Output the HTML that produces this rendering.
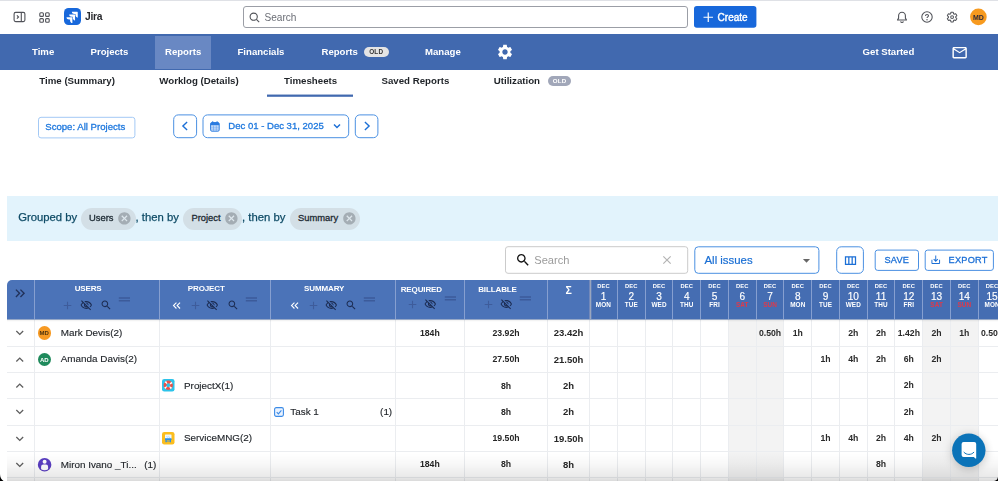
<!DOCTYPE html>
<html><head><meta charset="utf-8">
<style>
*{box-sizing:border-box;margin:0;padding:0}
html,body{width:998px;height:481px;overflow:hidden;background:#fff;font-family:"Liberation Sans",sans-serif;}
.a{position:absolute;white-space:nowrap}
#w{position:absolute;left:0;top:0;width:998px;height:481px;overflow:hidden;opacity:.999}
</style></head><body>
<div id="w">
<div class="a" style="left:0.00px;top:0.00px;width:998.00px;height:1.00px;background:#dfe1e6"></div>
<svg class="a" style="left:13px;top:11px" width="13" height="12" viewBox="0 0 13 12"><rect x="1.1" y="1.4" width="10.8" height="9.2" rx="1.6" fill="none" stroke="#505258" stroke-width="1.1"/><path d="M8.3 1.4v9.2" stroke="#505258" stroke-width="1.1"/><path d="M3.9 4.3l1.7 1.7-1.7 1.7" fill="none" stroke="#505258" stroke-width="1.1"/></svg>
<svg class="a" style="left:39px;top:11.5px" width="11" height="11" viewBox="0 0 11 11"><g fill="none" stroke="#505258" stroke-width="1.1"><rect x="0.8" y="0.8" width="3.6" height="3.6" rx="1"/><rect x="6.6" y="0.8" width="3.6" height="3.6" rx="1"/><rect x="0.8" y="6.6" width="3.6" height="3.6" rx="1"/><rect x="6.6" y="6.6" width="3.6" height="3.6" rx="1"/></g></svg>
<svg class="a" style="left:63.700px;top:8.300px" width="17" height="17" viewBox="0 0 32 32"><rect width="32" height="32" rx="8.500" fill="#1868db"/><g fill="#fff"><path d="M11.5 21.5h-1.9c-2.9 0-4.9-1.8-4.9-4.300h10.200c.5 0 .9.400.9.900v10.300c-2.500 0-4.300-2.100-4.300-4.900z" transform="translate(0,0)"/><path d="M16.5 16.400h-1.900c-2.900 0-4.900-1.700-4.900-4.300h10.200c.5 0 .9.400.9.900v10.300c-2.500 0-4.300-2.100-4.300-4.900z"/><path d="M21.600 11.400h-1.900c-2.900 0-4.900-1.800-4.900-4.300H25c.5 0 .9.400.9.900v10.200c-2.500 0-4.300-2-4.300-4.800z"/></g></svg>
<div class="a" style="left:85.00px;top:11.98px;font-size:10.3px;line-height:10.3px;font-weight:bold;color:#292a2e;letter-spacing:-.3px">Jira</div>
<div class="a" style="left:243.00px;top:6.00px;width:445.00px;height:22.00px;border:1px solid #9b9ea6;border-radius:3px;background:#fff"></div>
<svg class="a" style="left:248.5px;top:11.5px" width="11" height="11" viewBox="0 0 11 11"><circle cx="4.7" cy="4.7" r="3.6" fill="none" stroke="#505258" stroke-width="1.1"/><path d="M7.4 7.4l2.8 2.8" stroke="#505258" stroke-width="1.1"/></svg>
<div class="a" style="left:264.50px;top:12.75px;font-size:10.1px;line-height:10.1px;font-weight:normal;color:#6b6e76;">Search</div>
<svg class="a" style="left:693px;top:5px" width="65" height="24" viewBox="693 5 65 24"><rect x="694" y="6" width="62.400" height="21.800" rx="2.800" fill="#1868db"/></svg>
<svg class="a" style="left:702.5px;top:12px" width="10.5" height="10.500" viewBox="0 0 10 10"><path d="M5 0.500v9M0.500 5h9" stroke="#fff" stroke-width="1.150"/></svg>
<div class="a" style="left:717.60px;top:12.73px;font-size:10px;line-height:10px;font-weight:normal;color:#fff;-webkit-text-stroke:.4px">Create</div>
<svg class="a" style="left:896px;top:10.500px" width="12" height="13" viewBox="0 0 12 13"><path d="M6 1.300c-2 0-3.400 1.500-3.400 3.500v2.300l-1.100 1.900h9l-1.100-1.900V4.800c0-2-1.400-3.500-3.400-3.500z" fill="none" stroke="#505258" stroke-width="1.100" stroke-linejoin="round"/><path d="M4.600 10.300c.2.800.7 1.200 1.400 1.200s1.200-.4 1.400-1.200" fill="none" stroke="#505258" stroke-width="1.100"/></svg>
<svg class="a" style="left:921px;top:10.800px" width="12" height="12" viewBox="0 0 12 12"><circle cx="6" cy="6" r="5.200" fill="none" stroke="#505258" stroke-width="1.050"/><path d="M4.500 4.900c0-.9.700-1.500 1.500-1.500s1.500.6 1.500 1.400c0 1.100-1.500 1.100-1.500 2.300" fill="none" stroke="#505258" stroke-width="1.050"/><circle cx="6" cy="8.700" r=".7" fill="#505258"/></svg>
<svg class="a" style="left:945.900px;top:10.700px" width="12.200" height="12.200" viewBox="0 0 24 24"><path fill="none" stroke="#505258" stroke-width="2" stroke-linejoin="round" d="M19.140 12.940c.04-.3.060-.610.060-.940 0-.320-.020-.640-.070-.940l2.030-1.580c.180-.140.230-.410.120-.610l-1.920-3.320c-.12-.22-.37-.29-.59-.22l-2.390.96c-.5-.38-1.030-.7-1.620-.94l-.36-2.540c-.04-.24-.24-.41-.48-.41h-3.840c-.24 0-.43.170-.47.410l-.36 2.540c-.59.240-1.130.570-1.620.940l-2.390-.96c-.22-.08-.47 0-.59.220L2.740 8.870c-.12.210-.08.470.12.610l2.030 1.580c-.05.300-.09.630-.09.940s.02.640.07.940l-2.030 1.580c-.18.140-.23.410-.12.610l1.920 3.320c.12.220.37.290.59.220l2.390-.96c.5.380 1.030.7 1.620.94l.36 2.540c.05.240.24.410.48.410h3.840c.24 0 .44-.17.470-.41l.36-2.540c.59-.24 1.130-.56 1.620-.94l2.390.96c.22.080.47 0 .59-.22l1.920-3.320c.12-.22.070-.47-.12-.61l-2.010-1.580z"/><circle cx="12" cy="12" r="2.800" fill="none" stroke="#505258" stroke-width="2"/></svg>
<svg class="a" style="left:968px;top:6px" width="22" height="22" viewBox="968 6 22 22"><circle cx="978.400" cy="16.900" r="8.300" fill="#f79a1f"/></svg>
<div class="a" style="left:878.40px;width:200px;text-align:center;top:13.57px;font-size:7px;line-height:7px;font-weight:bold;color:#2d2a3a;">MD</div>
<div class="a" style="left:0.00px;top:34.00px;width:998.00px;height:35.70px;background:#4169af"></div>
<div class="a" style="left:154.60px;top:35.50px;width:56.20px;height:33.30px;background:#6988c3"></div>
<div class="a" style="left:32.00px;top:47.37px;font-size:9.6px;line-height:9.6px;font-weight:bold;color:#fff;">Time</div>
<div class="a" style="left:90.50px;top:47.37px;font-size:9.6px;line-height:9.6px;font-weight:bold;color:#fff;">Projects</div>
<div class="a" style="left:165.00px;top:47.37px;font-size:9.6px;line-height:9.6px;font-weight:bold;color:#fff;">Reports</div>
<div class="a" style="left:237.50px;top:47.37px;font-size:9.6px;line-height:9.6px;font-weight:bold;color:#fff;">Financials</div>
<div class="a" style="left:321.50px;top:47.37px;font-size:9.6px;line-height:9.6px;font-weight:bold;color:#fff;">Reports</div>
<div class="a" style="left:425.00px;top:47.37px;font-size:9.6px;line-height:9.6px;font-weight:bold;color:#fff;">Manage</div>
<div class="a" style="left:862.60px;top:47.37px;font-size:9.6px;line-height:9.6px;font-weight:bold;color:#fff;">Get Started</div>
<div class="a" style="left:363.50px;top:47.00px;width:25.00px;height:10.00px;background:#e4e4e4;border-radius:5px"></div>
<div class="a" style="left:276.20px;width:200px;text-align:center;top:49.48px;font-size:6.4px;line-height:6.4px;font-weight:bold;color:#333;letter-spacing:.2px">OLD</div>
<svg class="a" style="left:496.00px;top:43.00px;" width="18" height="18" viewBox="0 0 24 24"><path fill="#fff" d="M19.14 12.94c.04-.3.06-.61.06-.94 0-.32-.02-.64-.07-.94l2.03-1.58c.18-.14.23-.41.12-.61l-1.92-3.32c-.12-.22-.37-.29-.59-.22l-2.39.96c-.5-.38-1.03-.7-1.62-.94l-.36-2.54c-.04-.24-.24-.41-.48-.41h-3.84c-.24 0-.43.17-.47.41l-.36 2.54c-.59.24-1.13.57-1.62.94l-2.39-.96c-.22-.08-.47 0-.59.22L2.74 8.87c-.12.21-.08.47.12.61l2.03 1.58c-.05.3-.09.63-.09.94s.02.64.07.94l-2.03 1.58c-.18.14-.23.41-.12.61l1.92 3.32c.12.22.37.29.59.22l2.39-.96c.5.38 1.03.7 1.62.94l.36 2.54c.05.24.24.41.48.41h3.84c.24 0 .44-.17.47-.41l.36-2.54c.59-.24 1.13-.56 1.62-.94l2.39.96c.22.08.47 0 .59-.22l1.92-3.32c.12-.22.07-.47-.12-.61l-2.01-1.58zM12 15.6c-1.98 0-3.6-1.62-3.6-3.6s1.62-3.6 3.6-3.6 3.6 1.62 3.6 3.6-1.62 3.6-3.6 3.6z"/></svg>
<svg class="a" style="left:950.55px;top:43.55px;" width="17.3" height="17.3" viewBox="0 0 24 24"><path fill="#fff" d="M20 4H4c-1.1 0-1.99.9-1.99 2L2 18c0 1.1.9 2 2 2h16c1.1 0 2-.9 2-2V6c0-1.1-.9-2-2-2zm0 14H4V8l8 5 8-5v10zm-8-7L4 6h16l-8 5z"/></svg>
<div class="a" style="left:39.25px;top:76.29px;font-size:9.7px;line-height:9.7px;font-weight:bold;color:#1f2328;">Time (Summary)</div>
<div class="a" style="left:159.25px;top:76.29px;font-size:9.7px;line-height:9.7px;font-weight:bold;color:#1f2328;">Worklog (Details)</div>
<div class="a" style="left:284.00px;top:76.29px;font-size:9.7px;line-height:9.7px;font-weight:bold;color:#1f2328;">Timesheets</div>
<div class="a" style="left:381.50px;top:76.29px;font-size:9.7px;line-height:9.7px;font-weight:bold;color:#1f2328;">Saved Reports</div>
<div class="a" style="left:493.75px;top:76.29px;font-size:9.7px;line-height:9.7px;font-weight:bold;color:#1f2328;">Utilization</div>
<div class="a" style="left:267.00px;top:94.00px;width:86.00px;height:3.00px;background:linear-gradient(to bottom,rgba(65,105,175,.45) 0,rgba(65,105,175,.45) 33.300%,#4169af 33.300%,#4169af 66.600%,rgba(65,105,175,.8) 66.600%)"></div>
<div class="a" style="left:548.00px;top:76.20px;width:22.60px;height:9.40px;background:#a1a7b9;border-radius:5px"></div>
<div class="a" style="left:459.50px;width:200px;text-align:center;top:78.45px;font-size:6.2px;line-height:6.2px;font-weight:bold;color:#fff;letter-spacing:.2px">OLD</div>
<svg class="a" style="left:37px;top:115px" width="100" height="25" viewBox="37 115 100 25"><rect x="38.50" y="117.30" width="96.40" height="20.60" rx="2.5" fill="#fff" stroke="#a3c9f5" stroke-width="1"/></svg>
<div class="a" style="left:45.25px;top:122.37px;font-size:9.6px;line-height:9.6px;font-weight:normal;color:#1e78de;-webkit-text-stroke:.3px">Scope: All Projects</div>
<svg class="a" style="left:172px;top:113px" width="27" height="27" viewBox="172 113 27 27"><rect x="173.70" y="114.90" width="22.90" height="22.80" rx="4.5" fill="#fff" stroke="#4a90e2" stroke-width="1"/></svg>
<svg class="a" style="left:172.60px;top:114.20px" width="24" height="24" viewBox="0 0 24 24"><path d="M14.10 8.00 L9.90 12.00 L14.10 16.00" fill="none" stroke="#1b6fd6" stroke-width="1.4"/></svg>
<svg class="a" style="left:201px;top:113px" width="150" height="27" viewBox="201 113 150 27"><rect x="203.00" y="114.90" width="145.70" height="22.80" rx="4.5" fill="#fff" stroke="#4a90e2" stroke-width="1"/></svg>
<svg class="a" style="left:210.200px;top:121px" width="9.800" height="10.800" viewBox="0 0 9.800 10.800"><rect x="0.600" y="1.600" width="8.600" height="8.600" rx="1.300" fill="#d5e5fa" stroke="#2b7be0" stroke-width="1"/><path d="M0.600 4.200V2.900a1.300 1.300 0 0 1 1.300-1.300h6a1.300 1.300 0 0 1 1.300 1.300v1.300z" fill="#2b7be0"/><path d="M2.700 0.200v1.800M7.100 0.200v1.800" stroke="#2b7be0" stroke-width="1.100"/><path d="M3.500 4.500v5.400M6.300 4.500v5.400M1 6.200h7.800M1 8.100h7.800" stroke="#5e9cec" stroke-width=".55"/></svg>
<div class="a" style="left:228.25px;top:121.42px;font-size:9.55px;line-height:9.55px;font-weight:normal;color:#1e78de;-webkit-text-stroke:.3px">Dec 01 - Dec 31, 2025</div>
<svg class="a" style="left:324.90px;top:114.30px" width="24" height="24" viewBox="0 0 24 24"><path d="M9.00 10.40 L12.00 13.60 L15.00 10.40" fill="none" stroke="#1b6fd6" stroke-width="1.4"/></svg>
<svg class="a" style="left:353px;top:113px" width="27" height="27" viewBox="353 113 27 27"><rect x="355.30" y="114.90" width="22.60" height="22.80" rx="4.5" fill="#fff" stroke="#4a90e2" stroke-width="1"/></svg>
<svg class="a" style="left:355.20px;top:114.20px" width="24" height="24" viewBox="0 0 24 24"><path d="M9.90 8.00 L14.10 12.00 L9.90 16.00" fill="none" stroke="#1b6fd6" stroke-width="1.4"/></svg>
<div class="a" style="left:7.00px;top:195.60px;width:991.00px;height:45.20px;background:#e2f3fc"></div>
<div class="a" style="left:18.20px;top:212.23px;font-size:11.3px;line-height:11.3px;font-weight:normal;color:#0e4b66;-webkit-text-stroke:.25px">Grouped by</div>
<div class="a" style="left:80.80px;top:207.60px;width:55.00px;height:22.00px;background:#d3dfe6;border-radius:11px"></div>
<div class="a" style="left:89.00px;top:213.24px;font-size:9.4px;line-height:9.4px;font-weight:normal;color:#1d2a33;-webkit-text-stroke:.3px">Users</div>
<div class="a" style="left:120.90px;top:214.30px;width:8.00px;height:8.00px;background:#dde6ec;border-radius:50%"></div>
<svg class="a" style="left:117.30px;top:211.00px;" width="14.8" height="14.8" viewBox="0 0 24 24"><path fill="#a4adb4" d="M12 2C6.47 2 2 6.47 2 12s4.47 10 10 10 10-4.47 10-10S17.53 2 12 2zm5 13.59L15.59 17 12 13.41 8.41 17 7 15.59 10.59 12 7 8.41 8.41 7 12 10.59 15.59 7 17 8.41 13.41 12 17 15.59z"/></svg>
<div class="a" style="left:135.60px;top:212.23px;font-size:11.3px;line-height:11.3px;font-weight:normal;color:#0e4b66;-webkit-text-stroke:.25px">, then by</div>
<div class="a" style="left:183.00px;top:207.60px;width:59.40px;height:22.00px;background:#d3dfe6;border-radius:11px"></div>
<div class="a" style="left:191.40px;top:213.24px;font-size:9.4px;line-height:9.4px;font-weight:normal;color:#1d2a33;-webkit-text-stroke:.3px">Project</div>
<div class="a" style="left:227.80px;top:214.30px;width:8.00px;height:8.00px;background:#dde6ec;border-radius:50%"></div>
<svg class="a" style="left:224.20px;top:211.00px;" width="14.8" height="14.8" viewBox="0 0 24 24"><path fill="#a4adb4" d="M12 2C6.47 2 2 6.47 2 12s4.47 10 10 10 10-4.47 10-10S17.53 2 12 2zm5 13.59L15.59 17 12 13.41 8.41 17 7 15.59 10.59 12 7 8.41 8.41 7 12 10.59 15.59 7 17 8.41 13.41 12 17 15.59z"/></svg>
<div class="a" style="left:242.00px;top:212.23px;font-size:11.3px;line-height:11.3px;font-weight:normal;color:#0e4b66;-webkit-text-stroke:.25px">, then by</div>
<div class="a" style="left:290.00px;top:207.60px;width:70.40px;height:22.00px;background:#d3dfe6;border-radius:11px"></div>
<div class="a" style="left:298.00px;top:213.24px;font-size:9.4px;line-height:9.4px;font-weight:normal;color:#1d2a33;-webkit-text-stroke:.3px">Summary</div>
<div class="a" style="left:345.40px;top:214.30px;width:8.00px;height:8.00px;background:#dde6ec;border-radius:50%"></div>
<svg class="a" style="left:341.80px;top:211.00px;" width="14.8" height="14.8" viewBox="0 0 24 24"><path fill="#a4adb4" d="M12 2C6.47 2 2 6.47 2 12s4.47 10 10 10 10-4.47 10-10S17.53 2 12 2zm5 13.59L15.59 17 12 13.41 8.41 17 7 15.59 10.59 12 7 8.41 8.41 7 12 10.59 15.59 7 17 8.41 13.41 12 17 15.59z"/></svg>
<svg class="a" style="left:504px;top:245px" width="186" height="30" viewBox="504 245 186 30"><rect x="505.50" y="246.70" width="182.20" height="26.60" rx="2.5" fill="#fff" stroke="#cbcbcb" stroke-width="1"/></svg>
<svg class="a" style="left:515.00px;top:252.30px;" width="16" height="16" viewBox="0 0 24 24"><path fill="#111" d="M15.5 14h-.79l-.28-.27C15.41 12.59 16 11.11 16 9.5 16 5.91 13.09 3 9.5 3S3 5.91 3 9.5 5.91 16 9.5 16c1.61 0 3.09-.59 4.23-1.57l.27.28v.79l5 4.99L20.49 19l-4.99-5zm-6 0C7.01 14 5 11.99 5 9.5S7.01 5 9.5 5 14 7.01 14 9.5 11.99 14 9.5 14z"/></svg>
<div class="a" style="left:534.25px;top:254.85px;font-size:11.1px;line-height:11.1px;font-weight:normal;color:#9b9b9b;">Search</div>
<svg class="a" style="left:659.75px;top:253.25px;" width="14" height="14" viewBox="0 0 24 24"><path fill="#b3b3b3" d="M19 6.41L17.59 5 12 10.59 6.41 5 5 6.41 10.59 12 5 17.59 6.41 19 12 13.41 17.59 19 19 17.59 13.41 12z"/></svg>
<svg class="a" style="left:693px;top:245px" width="128" height="30" viewBox="693 245 128 30"><rect x="694.80" y="246.80" width="124.10" height="26.50" rx="3.5" fill="#fff" stroke="#4a90e2" stroke-width="1"/></svg>
<div class="a" style="left:704.50px;top:254.85px;font-size:11.4px;line-height:11.4px;font-weight:normal;color:#1a6fd4;-webkit-text-stroke:.2px">All issues</div>
<svg class="a" style="left:797.70px;top:251.70px;" width="17" height="17" viewBox="0 0 24 24"><path fill="#666" d="M7 10l5 5 5-5z"/></svg>
<svg class="a" style="left:835px;top:245px" width="30" height="30" viewBox="835 245 30 30"><rect x="836.70" y="246.80" width="26.70" height="26.50" rx="4.5" fill="#fff" stroke="#4a90e2" stroke-width="1"/></svg>
<svg class="a" style="left:842.50px;top:252.60px;" width="15" height="15" viewBox="0 0 24 24"><path fill="#1b6fd6" d="M3 5v14h18V5H3zm5.33 12H5V7h3.33v10zm5.34 0h-3.33V7h3.33v10zM19 17h-3.33V7H19v10z"/></svg>
<svg class="a" style="left:873px;top:248px" width="47" height="24" viewBox="873 248 47 24"><rect x="875.20" y="250.10" width="43.30" height="20.30" rx="2.5" fill="#fff" stroke="#4a90e2" stroke-width="1"/></svg>
<div class="a" style="left:796.85px;width:200px;text-align:center;top:255.81px;font-size:9.2px;line-height:9.2px;font-weight:normal;color:#1b6fd6;letter-spacing:.25px;-webkit-text-stroke:.3px">SAVE</div>
<svg class="a" style="left:923px;top:248px" width="72" height="24" viewBox="923 248 72 24"><rect x="925.20" y="250.10" width="68.20" height="20.30" rx="2.5" fill="#fff" stroke="#4a90e2" stroke-width="1"/></svg>
<svg class="a" style="left:930.45px;top:254.25px;" width="11.5" height="11.5" viewBox="0 0 24 24"><path fill="#1b6fd6" d="M19 12v7H5v-7H3v7c0 1.1.9 2 2 2h14c1.1 0 2-.9 2-2v-7h-2zm-6 .67l2.59-2.58L17 11.5l-5 5-5-5 1.41-1.41L11 12.67V3h2z"/></svg>
<div class="a" style="left:948.60px;top:255.81px;font-size:9.2px;line-height:9.2px;font-weight:normal;color:#1b6fd6;letter-spacing:.25px;-webkit-text-stroke:.3px">EXPORT</div>
<div class="a" style="left:7.00px;top:279.70px;width:991.00px;height:39.30px;background:#4b73b8;border-top-left-radius:5px"></div>
<div class="a" style="left:33.75px;top:279.70px;width:1.00px;height:39.30px;background:#869fd0"></div>
<div class="a" style="left:158.70px;top:279.70px;width:1.00px;height:39.30px;background:#869fd0"></div>
<div class="a" style="left:269.80px;top:279.70px;width:1.00px;height:39.30px;background:#869fd0"></div>
<div class="a" style="left:394.70px;top:279.70px;width:1.00px;height:39.30px;background:#869fd0"></div>
<div class="a" style="left:464.00px;top:279.70px;width:1.00px;height:39.30px;background:#869fd0"></div>
<div class="a" style="left:547.00px;top:279.70px;width:1.00px;height:39.30px;background:#869fd0"></div>
<div class="a" style="left:590.00px;top:279.70px;width:408.00px;height:39.30px;background:#456db2"></div>
<div class="a" style="left:589.00px;top:279.70px;width:3.00px;height:39.30px;background:linear-gradient(to right,#7389ba 0,#7389ba 33%,#9ba6bd 33%,#9ba6bd 67%,#5f7fb9 67%)"></div>
<div class="a" style="left:503.48px;width:200px;text-align:center;top:284.19px;font-size:5.8px;line-height:5.8px;font-weight:bold;color:#fff;letter-spacing:.1px">DEC</div>
<div class="a" style="left:503.48px;width:200px;text-align:center;top:291.75px;font-size:10.1px;line-height:10.1px;font-weight:normal;color:#fff;-webkit-text-stroke:.15px">1</div>
<div class="a" style="left:503.48px;width:200px;text-align:center;top:301.58px;font-size:6.4px;line-height:6.4px;font-weight:bold;color:#fff;letter-spacing:.1px">MON</div>
<div class="a" style="left:616.86px;top:279.70px;width:1.00px;height:39.30px;background:#869fd0"></div>
<div class="a" style="left:531.24px;width:200px;text-align:center;top:284.19px;font-size:5.8px;line-height:5.8px;font-weight:bold;color:#fff;letter-spacing:.1px">DEC</div>
<div class="a" style="left:531.24px;width:200px;text-align:center;top:291.75px;font-size:10.1px;line-height:10.1px;font-weight:normal;color:#fff;-webkit-text-stroke:.15px">2</div>
<div class="a" style="left:531.24px;width:200px;text-align:center;top:301.58px;font-size:6.4px;line-height:6.4px;font-weight:bold;color:#fff;letter-spacing:.1px">TUE</div>
<div class="a" style="left:644.62px;top:279.70px;width:1.00px;height:39.30px;background:#869fd0"></div>
<div class="a" style="left:559.00px;width:200px;text-align:center;top:284.19px;font-size:5.8px;line-height:5.8px;font-weight:bold;color:#fff;letter-spacing:.1px">DEC</div>
<div class="a" style="left:559.00px;width:200px;text-align:center;top:291.75px;font-size:10.1px;line-height:10.1px;font-weight:normal;color:#fff;-webkit-text-stroke:.15px">3</div>
<div class="a" style="left:559.00px;width:200px;text-align:center;top:301.58px;font-size:6.4px;line-height:6.4px;font-weight:bold;color:#fff;letter-spacing:.1px">WED</div>
<div class="a" style="left:672.38px;top:279.70px;width:1.00px;height:39.30px;background:#869fd0"></div>
<div class="a" style="left:586.76px;width:200px;text-align:center;top:284.19px;font-size:5.8px;line-height:5.8px;font-weight:bold;color:#fff;letter-spacing:.1px">DEC</div>
<div class="a" style="left:586.76px;width:200px;text-align:center;top:291.75px;font-size:10.1px;line-height:10.1px;font-weight:normal;color:#fff;-webkit-text-stroke:.15px">4</div>
<div class="a" style="left:586.76px;width:200px;text-align:center;top:301.58px;font-size:6.4px;line-height:6.4px;font-weight:bold;color:#fff;letter-spacing:.1px">THU</div>
<div class="a" style="left:700.14px;top:279.70px;width:1.00px;height:39.30px;background:#869fd0"></div>
<div class="a" style="left:614.52px;width:200px;text-align:center;top:284.19px;font-size:5.8px;line-height:5.8px;font-weight:bold;color:#fff;letter-spacing:.1px">DEC</div>
<div class="a" style="left:614.52px;width:200px;text-align:center;top:291.75px;font-size:10.1px;line-height:10.1px;font-weight:normal;color:#fff;-webkit-text-stroke:.15px">5</div>
<div class="a" style="left:614.52px;width:200px;text-align:center;top:301.58px;font-size:6.4px;line-height:6.4px;font-weight:bold;color:#fff;letter-spacing:.1px">FRI</div>
<div class="a" style="left:727.90px;top:279.70px;width:1.00px;height:39.30px;background:#869fd0"></div>
<div class="a" style="left:642.28px;width:200px;text-align:center;top:284.19px;font-size:5.8px;line-height:5.8px;font-weight:bold;color:#fff;letter-spacing:.1px">DEC</div>
<div class="a" style="left:642.28px;width:200px;text-align:center;top:291.75px;font-size:10.1px;line-height:10.1px;font-weight:normal;color:#fff;-webkit-text-stroke:.15px">6</div>
<div class="a" style="left:642.28px;width:200px;text-align:center;top:301.58px;font-size:6.4px;line-height:6.4px;font-weight:bold;color:#e0394a;letter-spacing:.1px">SAT</div>
<div class="a" style="left:755.66px;top:279.70px;width:1.00px;height:39.30px;background:#869fd0"></div>
<div class="a" style="left:670.04px;width:200px;text-align:center;top:284.19px;font-size:5.8px;line-height:5.8px;font-weight:bold;color:#fff;letter-spacing:.1px">DEC</div>
<div class="a" style="left:670.04px;width:200px;text-align:center;top:291.75px;font-size:10.1px;line-height:10.1px;font-weight:normal;color:#fff;-webkit-text-stroke:.15px">7</div>
<div class="a" style="left:670.04px;width:200px;text-align:center;top:301.58px;font-size:6.4px;line-height:6.4px;font-weight:bold;color:#e0394a;letter-spacing:.1px">SUN</div>
<div class="a" style="left:783.42px;top:279.70px;width:1.00px;height:39.30px;background:#869fd0"></div>
<div class="a" style="left:697.80px;width:200px;text-align:center;top:284.19px;font-size:5.8px;line-height:5.8px;font-weight:bold;color:#fff;letter-spacing:.1px">DEC</div>
<div class="a" style="left:697.80px;width:200px;text-align:center;top:291.75px;font-size:10.1px;line-height:10.1px;font-weight:normal;color:#fff;-webkit-text-stroke:.15px">8</div>
<div class="a" style="left:697.80px;width:200px;text-align:center;top:301.58px;font-size:6.4px;line-height:6.4px;font-weight:bold;color:#fff;letter-spacing:.1px">MON</div>
<div class="a" style="left:811.18px;top:279.70px;width:1.00px;height:39.30px;background:#869fd0"></div>
<div class="a" style="left:725.56px;width:200px;text-align:center;top:284.19px;font-size:5.8px;line-height:5.8px;font-weight:bold;color:#fff;letter-spacing:.1px">DEC</div>
<div class="a" style="left:725.56px;width:200px;text-align:center;top:291.75px;font-size:10.1px;line-height:10.1px;font-weight:normal;color:#fff;-webkit-text-stroke:.15px">9</div>
<div class="a" style="left:725.56px;width:200px;text-align:center;top:301.58px;font-size:6.4px;line-height:6.4px;font-weight:bold;color:#fff;letter-spacing:.1px">TUE</div>
<div class="a" style="left:838.94px;top:279.70px;width:1.00px;height:39.30px;background:#869fd0"></div>
<div class="a" style="left:753.32px;width:200px;text-align:center;top:284.19px;font-size:5.8px;line-height:5.8px;font-weight:bold;color:#fff;letter-spacing:.1px">DEC</div>
<div class="a" style="left:753.32px;width:200px;text-align:center;top:291.75px;font-size:10.1px;line-height:10.1px;font-weight:normal;color:#fff;-webkit-text-stroke:.15px">10</div>
<div class="a" style="left:753.32px;width:200px;text-align:center;top:301.58px;font-size:6.4px;line-height:6.4px;font-weight:bold;color:#fff;letter-spacing:.1px">WED</div>
<div class="a" style="left:866.70px;top:279.70px;width:1.00px;height:39.30px;background:#869fd0"></div>
<div class="a" style="left:781.08px;width:200px;text-align:center;top:284.19px;font-size:5.8px;line-height:5.8px;font-weight:bold;color:#fff;letter-spacing:.1px">DEC</div>
<div class="a" style="left:781.08px;width:200px;text-align:center;top:291.75px;font-size:10.1px;line-height:10.1px;font-weight:normal;color:#fff;-webkit-text-stroke:.15px">11</div>
<div class="a" style="left:781.08px;width:200px;text-align:center;top:301.58px;font-size:6.4px;line-height:6.4px;font-weight:bold;color:#fff;letter-spacing:.1px">THU</div>
<div class="a" style="left:894.46px;top:279.70px;width:1.00px;height:39.30px;background:#869fd0"></div>
<div class="a" style="left:808.84px;width:200px;text-align:center;top:284.19px;font-size:5.8px;line-height:5.8px;font-weight:bold;color:#fff;letter-spacing:.1px">DEC</div>
<div class="a" style="left:808.84px;width:200px;text-align:center;top:291.75px;font-size:10.1px;line-height:10.1px;font-weight:normal;color:#fff;-webkit-text-stroke:.15px">12</div>
<div class="a" style="left:808.84px;width:200px;text-align:center;top:301.58px;font-size:6.4px;line-height:6.4px;font-weight:bold;color:#fff;letter-spacing:.1px">FRI</div>
<div class="a" style="left:922.22px;top:279.70px;width:1.00px;height:39.30px;background:#869fd0"></div>
<div class="a" style="left:836.60px;width:200px;text-align:center;top:284.19px;font-size:5.8px;line-height:5.8px;font-weight:bold;color:#fff;letter-spacing:.1px">DEC</div>
<div class="a" style="left:836.60px;width:200px;text-align:center;top:291.75px;font-size:10.1px;line-height:10.1px;font-weight:normal;color:#fff;-webkit-text-stroke:.15px">13</div>
<div class="a" style="left:836.60px;width:200px;text-align:center;top:301.58px;font-size:6.4px;line-height:6.4px;font-weight:bold;color:#e0394a;letter-spacing:.1px">SAT</div>
<div class="a" style="left:949.98px;top:279.70px;width:1.00px;height:39.30px;background:#869fd0"></div>
<div class="a" style="left:864.36px;width:200px;text-align:center;top:284.19px;font-size:5.8px;line-height:5.8px;font-weight:bold;color:#fff;letter-spacing:.1px">DEC</div>
<div class="a" style="left:864.36px;width:200px;text-align:center;top:291.75px;font-size:10.1px;line-height:10.1px;font-weight:normal;color:#fff;-webkit-text-stroke:.15px">14</div>
<div class="a" style="left:864.36px;width:200px;text-align:center;top:301.58px;font-size:6.4px;line-height:6.4px;font-weight:bold;color:#e0394a;letter-spacing:.1px">SUN</div>
<div class="a" style="left:977.74px;top:279.70px;width:1.00px;height:39.30px;background:#869fd0"></div>
<div class="a" style="left:892.12px;width:200px;text-align:center;top:284.19px;font-size:5.8px;line-height:5.8px;font-weight:bold;color:#fff;letter-spacing:.1px">DEC</div>
<div class="a" style="left:892.12px;width:200px;text-align:center;top:291.75px;font-size:10.1px;line-height:10.1px;font-weight:normal;color:#fff;-webkit-text-stroke:.15px">15</div>
<div class="a" style="left:892.12px;width:200px;text-align:center;top:301.58px;font-size:6.4px;line-height:6.4px;font-weight:bold;color:#fff;letter-spacing:.1px">MON</div>
<svg class="a" style="left:12.25px;top:285.35px;" width="16.5" height="16.5" viewBox="0 0 24 24"><path fill="#22325a" d="M6.41 6L5 7.41 9.58 12 5 16.59 6.41 18l6-6z M13 6l-1.41 1.41L16.17 12l-4.58 4.59L13 18l6-6z"/></svg>
<div class="a" style="left:-11.90px;width:200px;text-align:center;top:284.63px;font-size:8px;line-height:8px;font-weight:bold;color:#fff;letter-spacing:-.12px">USERS</div>
<svg class="a" style="left:61.40px;top:298.80px;" width="13" height="13" viewBox="0 0 24 24"><path fill="#3e5c9b" d="M19 13h-6v6h-2v-6H5v-2h6V5h2v6h6v2z"/></svg>
<svg class="a" style="left:79.85px;top:299.05px;" width="12.5" height="12.5" viewBox="0 0 24 24"><path fill="#1c2c52" d="M12 6c3.79 0 7.17 2.13 8.82 5.5-.59 1.22-1.42 2.27-2.41 3.12l1.41 1.41c1.39-1.23 2.49-2.77 3.18-4.53C21.27 7.11 17 4 12 4c-1.27 0-2.49.2-3.64.57l1.65 1.65C10.66 6.09 11.32 6 12 6zm-1.07 1.14L13 9.21c.57.25 1.03.71 1.28 1.28l2.07 2.07c.08-.34.14-.7.14-1.07C16.5 9.01 14.48 7 12 7c-.37 0-.72.05-1.07.14zM2.01 3.87l2.68 2.68C3.06 7.83 1.77 9.53 1 11.5 2.73 15.89 7 19 12 19c1.52 0 2.98-.29 4.32-.82l3.42 3.42 1.41-1.41L3.42 2.45 2.01 3.87zm7.5 7.5l2.61 2.61c-.04.01-.08.02-.12.02-1.38 0-2.5-1.12-2.5-2.5 0-.05.01-.08.01-.13zm-3.4-3.4l1.75 1.75c-.23.55-.36 1.15-.36 1.78 0 2.48 2.02 4.5 4.5 4.5.63 0 1.23-.13 1.77-.36l.98.98c-.88.24-1.8.38-2.75.38-3.79 0-7.17-2.13-8.82-5.5.7-1.43 1.72-2.61 2.93-3.53z"/></svg>
<svg class="a" style="left:99.75px;top:299.15px;" width="12.3" height="12.3" viewBox="0 0 24 24"><path fill="#1c2c52" d="M15.5 14h-.79l-.28-.27C15.41 12.59 16 11.11 16 9.5 16 5.91 13.09 3 9.5 3S3 5.91 3 9.5 5.91 16 9.5 16c1.61 0 3.09-.59 4.23-1.57l.27.28v.79l5 4.99L20.49 19l-4.99-5zm-6 0C7.01 14 5 11.99 5 9.5S7.01 5 9.5 5 14 7.01 14 9.5 11.99 14 9.5 14z"/></svg>
<svg class="a" style="left:116.20px;top:291.00px;" width="16.8" height="16.8" viewBox="0 0 24 24"><path fill="#3c5b9a" d="M20 9H4v2h16V9zM4 15h16v-2H4v2z"/></svg>
<div class="a" style="left:106.25px;width:200px;text-align:center;top:284.63px;font-size:8px;line-height:8px;font-weight:bold;color:#fff;letter-spacing:-.12px">PROJECT</div>
<svg class="a" style="left:170.20px;top:298.70px;" width="13.2" height="13.2" viewBox="0 0 24 24"><path fill="#fff" d="M17.59 18L19 16.59 14.42 12 19 7.41 17.59 6l-6 6z M11 18l1.41-1.41L7.83 12l4.58-4.59L11 6l-6 6z"/></svg>
<svg class="a" style="left:188.50px;top:298.80px;" width="13" height="13" viewBox="0 0 24 24"><path fill="#3e5c9b" d="M19 13h-6v6h-2v-6H5v-2h6V5h2v6h6v2z"/></svg>
<svg class="a" style="left:206.45px;top:299.05px;" width="12.5" height="12.5" viewBox="0 0 24 24"><path fill="#1c2c52" d="M12 6c3.79 0 7.17 2.13 8.82 5.5-.59 1.22-1.42 2.27-2.41 3.12l1.41 1.41c1.39-1.23 2.49-2.77 3.18-4.53C21.27 7.11 17 4 12 4c-1.27 0-2.49.2-3.64.57l1.65 1.65C10.66 6.09 11.32 6 12 6zm-1.07 1.14L13 9.21c.57.25 1.03.71 1.28 1.28l2.07 2.07c.08-.34.14-.7.14-1.07C16.5 9.01 14.48 7 12 7c-.37 0-.72.05-1.07.14zM2.01 3.87l2.68 2.68C3.06 7.83 1.77 9.53 1 11.5 2.73 15.89 7 19 12 19c1.52 0 2.98-.29 4.32-.82l3.42 3.42 1.41-1.41L3.42 2.45 2.01 3.87zm7.5 7.5l2.61 2.61c-.04.01-.08.02-.12.02-1.38 0-2.5-1.12-2.5-2.5 0-.05.01-.08.01-.13zm-3.4-3.4l1.75 1.75c-.23.55-.36 1.15-.36 1.78 0 2.48 2.02 4.5 4.5 4.5.63 0 1.23-.13 1.77-.36l.98.98c-.88.24-1.8.38-2.75.38-3.79 0-7.17-2.13-8.82-5.5.7-1.43 1.72-2.61 2.93-3.53z"/></svg>
<svg class="a" style="left:226.55px;top:299.15px;" width="12.3" height="12.3" viewBox="0 0 24 24"><path fill="#1c2c52" d="M15.5 14h-.79l-.28-.27C15.41 12.59 16 11.11 16 9.5 16 5.91 13.09 3 9.5 3S3 5.91 3 9.5 5.91 16 9.5 16c1.61 0 3.09-.59 4.23-1.57l.27.28v.79l5 4.99L20.49 19l-4.99-5zm-6 0C7.01 14 5 11.99 5 9.5S7.01 5 9.5 5 14 7.01 14 9.5 11.99 14 9.5 14z"/></svg>
<svg class="a" style="left:243.10px;top:291.00px;" width="16.8" height="16.8" viewBox="0 0 24 24"><path fill="#3c5b9a" d="M20 9H4v2h16V9zM4 15h16v-2H4v2z"/></svg>
<div class="a" style="left:224.15px;width:200px;text-align:center;top:284.63px;font-size:8px;line-height:8px;font-weight:bold;color:#fff;letter-spacing:-.12px">SUMMARY</div>
<svg class="a" style="left:288.40px;top:298.70px;" width="13.2" height="13.2" viewBox="0 0 24 24"><path fill="#fff" d="M17.59 18L19 16.59 14.42 12 19 7.41 17.59 6l-6 6z M11 18l1.41-1.41L7.83 12l4.58-4.59L11 6l-6 6z"/></svg>
<svg class="a" style="left:306.50px;top:298.80px;" width="13" height="13" viewBox="0 0 24 24"><path fill="#3e5c9b" d="M19 13h-6v6h-2v-6H5v-2h6V5h2v6h6v2z"/></svg>
<svg class="a" style="left:324.75px;top:299.05px;" width="12.5" height="12.5" viewBox="0 0 24 24"><path fill="#1c2c52" d="M12 6c3.79 0 7.17 2.13 8.82 5.5-.59 1.22-1.42 2.27-2.41 3.12l1.41 1.41c1.39-1.23 2.49-2.77 3.18-4.53C21.27 7.11 17 4 12 4c-1.27 0-2.49.2-3.64.57l1.65 1.65C10.66 6.09 11.32 6 12 6zm-1.07 1.14L13 9.21c.57.25 1.03.71 1.28 1.28l2.07 2.07c.08-.34.14-.7.14-1.07C16.5 9.01 14.48 7 12 7c-.37 0-.72.05-1.07.14zM2.01 3.87l2.68 2.68C3.06 7.83 1.77 9.53 1 11.5 2.73 15.89 7 19 12 19c1.52 0 2.98-.29 4.32-.82l3.42 3.42 1.41-1.41L3.42 2.45 2.01 3.87zm7.5 7.5l2.61 2.61c-.04.01-.08.02-.12.02-1.38 0-2.5-1.12-2.5-2.5 0-.05.01-.08.01-.13zm-3.4-3.4l1.75 1.75c-.23.55-.36 1.15-.36 1.78 0 2.48 2.02 4.5 4.5 4.5.63 0 1.23-.13 1.77-.36l.98.98c-.88.24-1.8.38-2.75.38-3.79 0-7.17-2.13-8.82-5.5.7-1.43 1.72-2.61 2.93-3.53z"/></svg>
<svg class="a" style="left:344.75px;top:299.15px;" width="12.3" height="12.3" viewBox="0 0 24 24"><path fill="#1c2c52" d="M15.5 14h-.79l-.28-.27C15.41 12.59 16 11.11 16 9.5 16 5.91 13.09 3 9.5 3S3 5.91 3 9.5 5.91 16 9.5 16c1.61 0 3.09-.59 4.23-1.57l.27.28v.79l5 4.99L20.49 19l-4.99-5zm-6 0C7.01 14 5 11.99 5 9.5S7.01 5 9.5 5 14 7.01 14 9.5 11.99 14 9.5 14z"/></svg>
<svg class="a" style="left:361.20px;top:291.00px;" width="16.8" height="16.8" viewBox="0 0 24 24"><path fill="#3c5b9a" d="M20 9H4v2h16V9zM4 15h16v-2H4v2z"/></svg>
<div class="a" style="left:321.35px;width:200px;text-align:center;top:286.33px;font-size:8px;line-height:8px;font-weight:bold;color:#fff;letter-spacing:-.12px">REQUIRED</div>
<svg class="a" style="left:405.80px;top:298.00px;" width="13" height="13" viewBox="0 0 24 24"><path fill="#3e5c9b" d="M19 13h-6v6h-2v-6H5v-2h6V5h2v6h6v2z"/></svg>
<svg class="a" style="left:423.95px;top:298.25px;" width="12.5" height="12.5" viewBox="0 0 24 24"><path fill="#1c2c52" d="M12 6c3.79 0 7.17 2.13 8.82 5.5-.59 1.22-1.42 2.27-2.41 3.12l1.41 1.41c1.39-1.23 2.49-2.77 3.18-4.53C21.27 7.11 17 4 12 4c-1.27 0-2.49.2-3.64.57l1.65 1.65C10.66 6.09 11.32 6 12 6zm-1.07 1.14L13 9.21c.57.25 1.03.71 1.28 1.28l2.07 2.07c.08-.34.14-.7.14-1.07C16.5 9.01 14.48 7 12 7c-.37 0-.72.05-1.07.14zM2.01 3.87l2.68 2.68C3.06 7.83 1.77 9.53 1 11.5 2.73 15.89 7 19 12 19c1.52 0 2.98-.29 4.32-.82l3.42 3.42 1.41-1.41L3.42 2.45 2.01 3.87zm7.5 7.5l2.61 2.61c-.04.01-.08.02-.12.02-1.38 0-2.5-1.12-2.5-2.5 0-.05.01-.08.01-.13zm-3.4-3.4l1.75 1.75c-.23.55-.36 1.15-.36 1.78 0 2.48 2.02 4.5 4.5 4.5.63 0 1.23-.13 1.77-.36l.98.98c-.88.24-1.8.38-2.75.38-3.79 0-7.17-2.13-8.82-5.5.7-1.43 1.72-2.61 2.93-3.53z"/></svg>
<svg class="a" style="left:442.00px;top:290.30px;" width="16.8" height="16.8" viewBox="0 0 24 24"><path fill="#3c5b9a" d="M20 9H4v2h16V9zM4 15h16v-2H4v2z"/></svg>
<div class="a" style="left:397.50px;width:200px;text-align:center;top:286.33px;font-size:8px;line-height:8px;font-weight:bold;color:#fff;letter-spacing:-.12px">BILLABLE</div>
<svg class="a" style="left:481.75px;top:298.00px;" width="13" height="13" viewBox="0 0 24 24"><path fill="#3e5c9b" d="M19 13h-6v6h-2v-6H5v-2h6V5h2v6h6v2z"/></svg>
<svg class="a" style="left:500.25px;top:298.25px;" width="12.5" height="12.5" viewBox="0 0 24 24"><path fill="#1c2c52" d="M12 6c3.79 0 7.17 2.13 8.82 5.5-.59 1.22-1.42 2.27-2.41 3.12l1.41 1.41c1.39-1.23 2.49-2.77 3.18-4.53C21.27 7.11 17 4 12 4c-1.27 0-2.49.2-3.64.57l1.65 1.65C10.66 6.09 11.32 6 12 6zm-1.07 1.14L13 9.21c.57.25 1.03.71 1.28 1.28l2.07 2.07c.08-.34.14-.7.14-1.07C16.5 9.01 14.48 7 12 7c-.37 0-.72.05-1.07.14zM2.01 3.87l2.68 2.68C3.06 7.83 1.77 9.53 1 11.5 2.73 15.89 7 19 12 19c1.52 0 2.98-.29 4.32-.82l3.42 3.42 1.41-1.41L3.42 2.45 2.01 3.87zm7.5 7.5l2.61 2.61c-.04.01-.08.02-.12.02-1.38 0-2.5-1.12-2.5-2.5 0-.05.01-.08.01-.13zm-3.4-3.4l1.75 1.75c-.23.55-.36 1.15-.36 1.78 0 2.48 2.02 4.5 4.5 4.5.63 0 1.23-.13 1.77-.36l.98.98c-.88.24-1.8.38-2.75.38-3.79 0-7.17-2.13-8.82-5.5.7-1.43 1.72-2.61 2.93-3.53z"/></svg>
<svg class="a" style="left:516.60px;top:290.30px;" width="16.8" height="16.8" viewBox="0 0 24 24"><path fill="#3c5b9a" d="M20 9H4v2h16V9zM4 15h16v-2H4v2z"/></svg>
<div class="a" style="left:468.70px;width:200px;text-align:center;top:284.71px;font-size:10.5px;line-height:10.5px;font-weight:bold;color:#fff;">&#931;</div>
<div class="a" style="left:728.40px;top:319.00px;width:27.76px;height:162.00px;background:#f3f3f3"></div>
<div class="a" style="left:756.16px;top:319.00px;width:27.76px;height:162.00px;background:#f3f3f3"></div>
<div class="a" style="left:922.72px;top:319.00px;width:27.76px;height:162.00px;background:#f3f3f3"></div>
<div class="a" style="left:950.48px;top:319.00px;width:27.76px;height:162.00px;background:#f3f3f3"></div>
<div class="a" style="left:7.00px;top:346.00px;width:991.00px;height:1.00px;background:#ebedf0"></div>
<div class="a" style="left:7.00px;top:372.00px;width:991.00px;height:1.00px;background:#ebedf0"></div>
<div class="a" style="left:7.00px;top:398.00px;width:991.00px;height:1.00px;background:#ebedf0"></div>
<div class="a" style="left:7.00px;top:425.00px;width:991.00px;height:1.00px;background:#ebedf0"></div>
<div class="a" style="left:7.00px;top:451.00px;width:991.00px;height:1.00px;background:#ebedf0"></div>
<div class="a" style="left:7.00px;top:477.00px;width:991.00px;height:1.00px;background:#ebedf0"></div>
<div class="a" style="left:33.75px;top:319.00px;width:1.00px;height:162.00px;background:#ebedf0"></div>
<div class="a" style="left:158.70px;top:319.00px;width:1.00px;height:162.00px;background:#ebedf0"></div>
<div class="a" style="left:269.80px;top:319.00px;width:1.00px;height:162.00px;background:#ebedf0"></div>
<div class="a" style="left:394.70px;top:319.00px;width:1.00px;height:162.00px;background:#ebedf0"></div>
<div class="a" style="left:464.00px;top:319.00px;width:1.00px;height:162.00px;background:#ebedf0"></div>
<div class="a" style="left:547.00px;top:319.00px;width:1.00px;height:162.00px;background:#ebedf0"></div>
<div class="a" style="left:589.10px;top:319.00px;width:1.00px;height:162.00px;background:#ebedf0"></div>
<div class="a" style="left:616.86px;top:319.00px;width:1.00px;height:162.00px;background:#ebedf0"></div>
<div class="a" style="left:644.62px;top:319.00px;width:1.00px;height:162.00px;background:#ebedf0"></div>
<div class="a" style="left:672.38px;top:319.00px;width:1.00px;height:162.00px;background:#ebedf0"></div>
<div class="a" style="left:700.14px;top:319.00px;width:1.00px;height:162.00px;background:#ebedf0"></div>
<div class="a" style="left:727.90px;top:319.00px;width:1.00px;height:162.00px;background:#ebedf0"></div>
<div class="a" style="left:755.66px;top:319.00px;width:1.00px;height:162.00px;background:#ebedf0"></div>
<div class="a" style="left:783.42px;top:319.00px;width:1.00px;height:162.00px;background:#ebedf0"></div>
<div class="a" style="left:811.18px;top:319.00px;width:1.00px;height:162.00px;background:#ebedf0"></div>
<div class="a" style="left:838.94px;top:319.00px;width:1.00px;height:162.00px;background:#ebedf0"></div>
<div class="a" style="left:866.70px;top:319.00px;width:1.00px;height:162.00px;background:#ebedf0"></div>
<div class="a" style="left:894.46px;top:319.00px;width:1.00px;height:162.00px;background:#ebedf0"></div>
<div class="a" style="left:922.22px;top:319.00px;width:1.00px;height:162.00px;background:#ebedf0"></div>
<div class="a" style="left:949.98px;top:319.00px;width:1.00px;height:162.00px;background:#ebedf0"></div>
<div class="a" style="left:977.74px;top:319.00px;width:1.00px;height:162.00px;background:#ebedf0"></div>
<svg class="a" style="left:11.50px;top:325.30px;" width="15.5" height="15.5" viewBox="0 0 24 24"><path fill="#5f5f5f" d="M16.59 8.59L12 13.17 7.41 8.59 6 10l6 6 6-6z"/></svg>
<svg class="a" style="left:11.50px;top:351.60px;" width="15.5" height="15.5" viewBox="0 0 24 24"><path fill="#5f5f5f" d="M12 8l-6 6 1.41 1.41L12 10.83l4.59 4.59L18 14z"/></svg>
<svg class="a" style="left:11.50px;top:377.90px;" width="15.5" height="15.5" viewBox="0 0 24 24"><path fill="#5f5f5f" d="M12 8l-6 6 1.41 1.41L12 10.83l4.59 4.59L18 14z"/></svg>
<svg class="a" style="left:11.50px;top:404.20px;" width="15.5" height="15.5" viewBox="0 0 24 24"><path fill="#5f5f5f" d="M16.59 8.59L12 13.17 7.41 8.59 6 10l6 6 6-6z"/></svg>
<svg class="a" style="left:11.50px;top:430.50px;" width="15.5" height="15.5" viewBox="0 0 24 24"><path fill="#5f5f5f" d="M16.59 8.59L12 13.17 7.41 8.59 6 10l6 6 6-6z"/></svg>
<svg class="a" style="left:11.50px;top:456.80px;" width="15.5" height="15.5" viewBox="0 0 24 24"><path fill="#5f5f5f" d="M16.59 8.59L12 13.17 7.41 8.59 6 10l6 6 6-6z"/></svg>
<div class="a" style="left:37.50px;top:326.30px;width:13.50px;height:13.50px;border-radius:50%;background:#f79a23"></div>
<div class="a" style="left:-55.75px;width:200px;text-align:center;top:330.27px;font-size:6px;line-height:6px;font-weight:bold;color:#4a3210;">MD</div>
<div class="a" style="left:60.75px;top:328.17px;font-size:9.9px;line-height:9.9px;font-weight:normal;color:#1f2328;-webkit-text-stroke:.15px">Mark Devis(2)</div>
<div class="a" style="left:37.50px;top:352.60px;width:13.50px;height:13.50px;border-radius:50%;background:#1f8a5c"></div>
<div class="a" style="left:-55.75px;width:200px;text-align:center;top:356.57px;font-size:6px;line-height:6px;font-weight:bold;color:#fff;">AD</div>
<div class="a" style="left:60.75px;top:354.47px;font-size:9.9px;line-height:9.9px;font-weight:normal;color:#1f2328;-webkit-text-stroke:.15px">Amanda Davis(2)</div>
<svg class="a" style="left:162.400px;top:379.40px" width="12.500" height="12.500" viewBox="0 0 25 25"><rect width="25" height="25" rx="4.500" fill="#2cc3ea"/><circle cx="12.500" cy="12.500" r="6.600" fill="none" stroke="#ea5148" stroke-width="5.400"/><circle cx="12.500" cy="12.500" r="6.600" fill="none" stroke="#fff" stroke-width="5.400" stroke-dasharray="2.600 7.767" stroke-dashoffset="-3.880"/></svg>
<div class="a" style="left:184.00px;top:380.77px;font-size:9.9px;line-height:9.9px;font-weight:normal;color:#1f2328;-webkit-text-stroke:.15px">ProjectX(1)</div>
<svg class="a" style="left:274.200px;top:406.95px" width="10" height="10" viewBox="0 0 10 10"><rect x="0.600" y="0.600" width="8.800" height="8.800" rx="1.600" fill="#eaf3ff" stroke="#3c8be6" stroke-width="1.100"/><path d="M2.700 5.100l1.700 1.700 3-3.400" fill="none" stroke="#3c8be6" stroke-width="1.150"/></svg>
<div class="a" style="left:290.30px;top:407.07px;font-size:9.9px;line-height:9.9px;font-weight:normal;color:#1f2328;-webkit-text-stroke:.15px">Task 1</div>
<div class="a" style="left:380.10px;top:407.07px;font-size:9.9px;line-height:9.9px;font-weight:normal;color:#1f2328;-webkit-text-stroke:.15px">(1)</div>
<svg class="a" style="left:162.400px;top:432.00px" width="12.500" height="12.500" viewBox="0 0 25 25"><rect width="25" height="25" rx="4.500" fill="#fbbd1e"/><rect x="6" y="5" width="13" height="9" rx="1" fill="#eef7ff"/><path d="M9 8l2.500 3 2-2 2.500 3" fill="none" stroke="#9bd0f5" stroke-width="1.300"/><rect x="6" y="12.500" width="13" height="3.500" fill="#2f8fe0"/><rect x="7" y="16" width="2.400" height="4.500" fill="#2f8fe0"/><rect x="15.600" y="16" width="2.400" height="4.500" fill="#2f8fe0"/><rect x="7" y="17.300" width="11" height="1.600" fill="#2f8fe0"/></svg>
<div class="a" style="left:184.00px;top:433.37px;font-size:9.9px;line-height:9.9px;font-weight:normal;color:#1f2328;-webkit-text-stroke:.15px">ServiceMNG(2)</div>
<svg class="a" style="left:36px;top:456px" width="18" height="18" viewBox="36 456 18 18"><circle cx="44.600" cy="464.700" r="6.750" fill="#5a3ec2"/><circle cx="44.600" cy="461.800" r="2" fill="#fff"/><path d="M41.100 469.300v-2.600a2.200 2.200 0 0 1 2.200-2.200h2.600a2.200 2.200 0 0 1 2.200 2.200v2.600a6.700 6.700 0 0 1-7 0z" fill="#fff"/></svg>
<div class="a" style="left:60.75px;top:459.67px;font-size:9.9px;line-height:9.9px;font-weight:normal;color:#1f2328;-webkit-text-stroke:.15px">Miron Ivano _Ti...</div>
<div class="a" style="left:144.25px;top:459.67px;font-size:9.9px;line-height:9.9px;font-weight:normal;color:#1f2328;-webkit-text-stroke:.15px">(1)</div>
<div class="a" style="left:329.85px;width:200px;text-align:center;top:328.99px;font-size:8.7px;line-height:8.7px;font-weight:bold;color:#262626;">184h</div>
<div class="a" style="left:406.00px;width:200px;text-align:center;top:328.99px;font-size:8.7px;line-height:8.7px;font-weight:bold;color:#262626;">23.92h</div>
<div class="a" style="left:468.50px;width:200px;text-align:center;top:328.31px;font-size:9.5px;line-height:9.5px;font-weight:bold;color:#262626;">23.42h</div>
<div class="a" style="left:406.00px;width:200px;text-align:center;top:355.29px;font-size:8.7px;line-height:8.7px;font-weight:bold;color:#262626;">27.50h</div>
<div class="a" style="left:468.50px;width:200px;text-align:center;top:354.61px;font-size:9.5px;line-height:9.5px;font-weight:bold;color:#262626;">21.50h</div>
<div class="a" style="left:406.00px;width:200px;text-align:center;top:381.59px;font-size:8.7px;line-height:8.7px;font-weight:bold;color:#262626;">8h</div>
<div class="a" style="left:468.50px;width:200px;text-align:center;top:380.91px;font-size:9.5px;line-height:9.5px;font-weight:bold;color:#262626;">2h</div>
<div class="a" style="left:406.00px;width:200px;text-align:center;top:407.89px;font-size:8.7px;line-height:8.7px;font-weight:bold;color:#262626;">8h</div>
<div class="a" style="left:468.50px;width:200px;text-align:center;top:407.21px;font-size:9.5px;line-height:9.5px;font-weight:bold;color:#262626;">2h</div>
<div class="a" style="left:406.00px;width:200px;text-align:center;top:434.19px;font-size:8.7px;line-height:8.7px;font-weight:bold;color:#262626;">19.50h</div>
<div class="a" style="left:468.50px;width:200px;text-align:center;top:433.51px;font-size:9.5px;line-height:9.5px;font-weight:bold;color:#262626;">19.50h</div>
<div class="a" style="left:329.85px;width:200px;text-align:center;top:460.49px;font-size:8.7px;line-height:8.7px;font-weight:bold;color:#262626;">184h</div>
<div class="a" style="left:406.00px;width:200px;text-align:center;top:460.49px;font-size:8.7px;line-height:8.7px;font-weight:bold;color:#262626;">8h</div>
<div class="a" style="left:468.50px;width:200px;text-align:center;top:459.81px;font-size:9.5px;line-height:9.5px;font-weight:bold;color:#262626;">8h</div>
<div class="a" style="left:670.04px;width:200px;text-align:center;top:328.89px;font-size:8.7px;line-height:8.7px;font-weight:bold;color:#2a2a2a;">0.50h</div>
<div class="a" style="left:697.80px;width:200px;text-align:center;top:328.89px;font-size:8.7px;line-height:8.7px;font-weight:bold;color:#2a2a2a;">1h</div>
<div class="a" style="left:753.32px;width:200px;text-align:center;top:328.89px;font-size:8.7px;line-height:8.7px;font-weight:bold;color:#2a2a2a;">2h</div>
<div class="a" style="left:781.08px;width:200px;text-align:center;top:328.89px;font-size:8.7px;line-height:8.7px;font-weight:bold;color:#2a2a2a;">2h</div>
<div class="a" style="left:808.84px;width:200px;text-align:center;top:328.89px;font-size:8.7px;line-height:8.7px;font-weight:bold;color:#2a2a2a;">1.42h</div>
<div class="a" style="left:836.60px;width:200px;text-align:center;top:328.89px;font-size:8.7px;line-height:8.7px;font-weight:bold;color:#2a2a2a;">2h</div>
<div class="a" style="left:864.36px;width:200px;text-align:center;top:328.89px;font-size:8.7px;line-height:8.7px;font-weight:bold;color:#2a2a2a;">1h</div>
<div class="a" style="left:892.12px;width:200px;text-align:center;top:328.89px;font-size:8.7px;line-height:8.7px;font-weight:bold;color:#2a2a2a;">0.50h</div>
<div class="a" style="left:725.56px;width:200px;text-align:center;top:355.19px;font-size:8.7px;line-height:8.7px;font-weight:bold;color:#2a2a2a;">1h</div>
<div class="a" style="left:753.32px;width:200px;text-align:center;top:355.19px;font-size:8.7px;line-height:8.7px;font-weight:bold;color:#2a2a2a;">4h</div>
<div class="a" style="left:781.08px;width:200px;text-align:center;top:355.19px;font-size:8.7px;line-height:8.7px;font-weight:bold;color:#2a2a2a;">2h</div>
<div class="a" style="left:808.84px;width:200px;text-align:center;top:355.19px;font-size:8.7px;line-height:8.7px;font-weight:bold;color:#2a2a2a;">6h</div>
<div class="a" style="left:836.60px;width:200px;text-align:center;top:355.19px;font-size:8.7px;line-height:8.7px;font-weight:bold;color:#2a2a2a;">2h</div>
<div class="a" style="left:808.84px;width:200px;text-align:center;top:381.49px;font-size:8.7px;line-height:8.7px;font-weight:bold;color:#2a2a2a;">2h</div>
<div class="a" style="left:808.84px;width:200px;text-align:center;top:407.79px;font-size:8.7px;line-height:8.7px;font-weight:bold;color:#2a2a2a;">2h</div>
<div class="a" style="left:725.56px;width:200px;text-align:center;top:434.09px;font-size:8.7px;line-height:8.7px;font-weight:bold;color:#2a2a2a;">1h</div>
<div class="a" style="left:753.32px;width:200px;text-align:center;top:434.09px;font-size:8.7px;line-height:8.7px;font-weight:bold;color:#2a2a2a;">4h</div>
<div class="a" style="left:781.08px;width:200px;text-align:center;top:434.09px;font-size:8.7px;line-height:8.7px;font-weight:bold;color:#2a2a2a;">2h</div>
<div class="a" style="left:808.84px;width:200px;text-align:center;top:434.09px;font-size:8.7px;line-height:8.7px;font-weight:bold;color:#2a2a2a;">4h</div>
<div class="a" style="left:836.60px;width:200px;text-align:center;top:434.09px;font-size:8.7px;line-height:8.7px;font-weight:bold;color:#2a2a2a;">2h</div>
<div class="a" style="left:781.08px;width:200px;text-align:center;top:460.39px;font-size:8.7px;line-height:8.7px;font-weight:bold;color:#2a2a2a;">8h</div>
<div class="a" style="left:7.00px;top:319.00px;width:991.00px;height:1.00px;background:#a4b8da"></div>
<div class="a" style="left:7.00px;top:319.00px;width:991.00px;height:3.00px;background:linear-gradient(rgba(0,0,0,.10),rgba(0,0,0,0))"></div>
<div class="a" style="left:7.00px;top:452.00px;width:991.00px;height:29.00px;background:linear-gradient(rgba(0,0,0,0) 0%,rgba(0,0,0,.03) 40%,rgba(0,0,0,.09) 86%,rgba(0,0,0,.15) 100%)"></div>
<svg class="a" style="left:0;top:474px" width="4" height="7" viewBox="0 0 4 7"><path d="M0 0v7h3.600C1.300 5.500 0 3.500 0 0z" fill="#000"/></svg><svg class="a" style="left:994px;top:477px" width="4" height="4" viewBox="0 0 4 4"><path d="M4 0v4H0C2.500 3.500 3.500 2.500 4 0z" fill="#000"/></svg>
<svg class="a" style="left:930px;top:412px;overflow:visible" width="68" height="69" viewBox="930 412 68 69"><defs><filter id="cs" x="-60%" y="-60%" width="220%" height="220%"><feGaussianBlur stdDeviation="5"/></filter></defs><circle cx="968.8" cy="452" r="17" fill="rgba(0,0,0,.22)" filter="url(#cs)"/><circle cx="968.8" cy="450.300" r="16.700" fill="#0b73b8"/><path d="M963.600 442h10.600a2 2 0 0 1 2 2v14.200a.4.400 0 0 1-.7.300l-1.700-1.500h-10.200a2 2 0 0 1-2-2v-11a2 2 0 0 1 2-2z" fill="#fff"/><path d="M964 452.300c1.300 1.400 2.900 2.100 4.900 2.100s3.600-.7 4.900-2.100" fill="none" stroke="#0b73b8" stroke-width="1" stroke-linecap="round"/></svg>
</div></body></html>
